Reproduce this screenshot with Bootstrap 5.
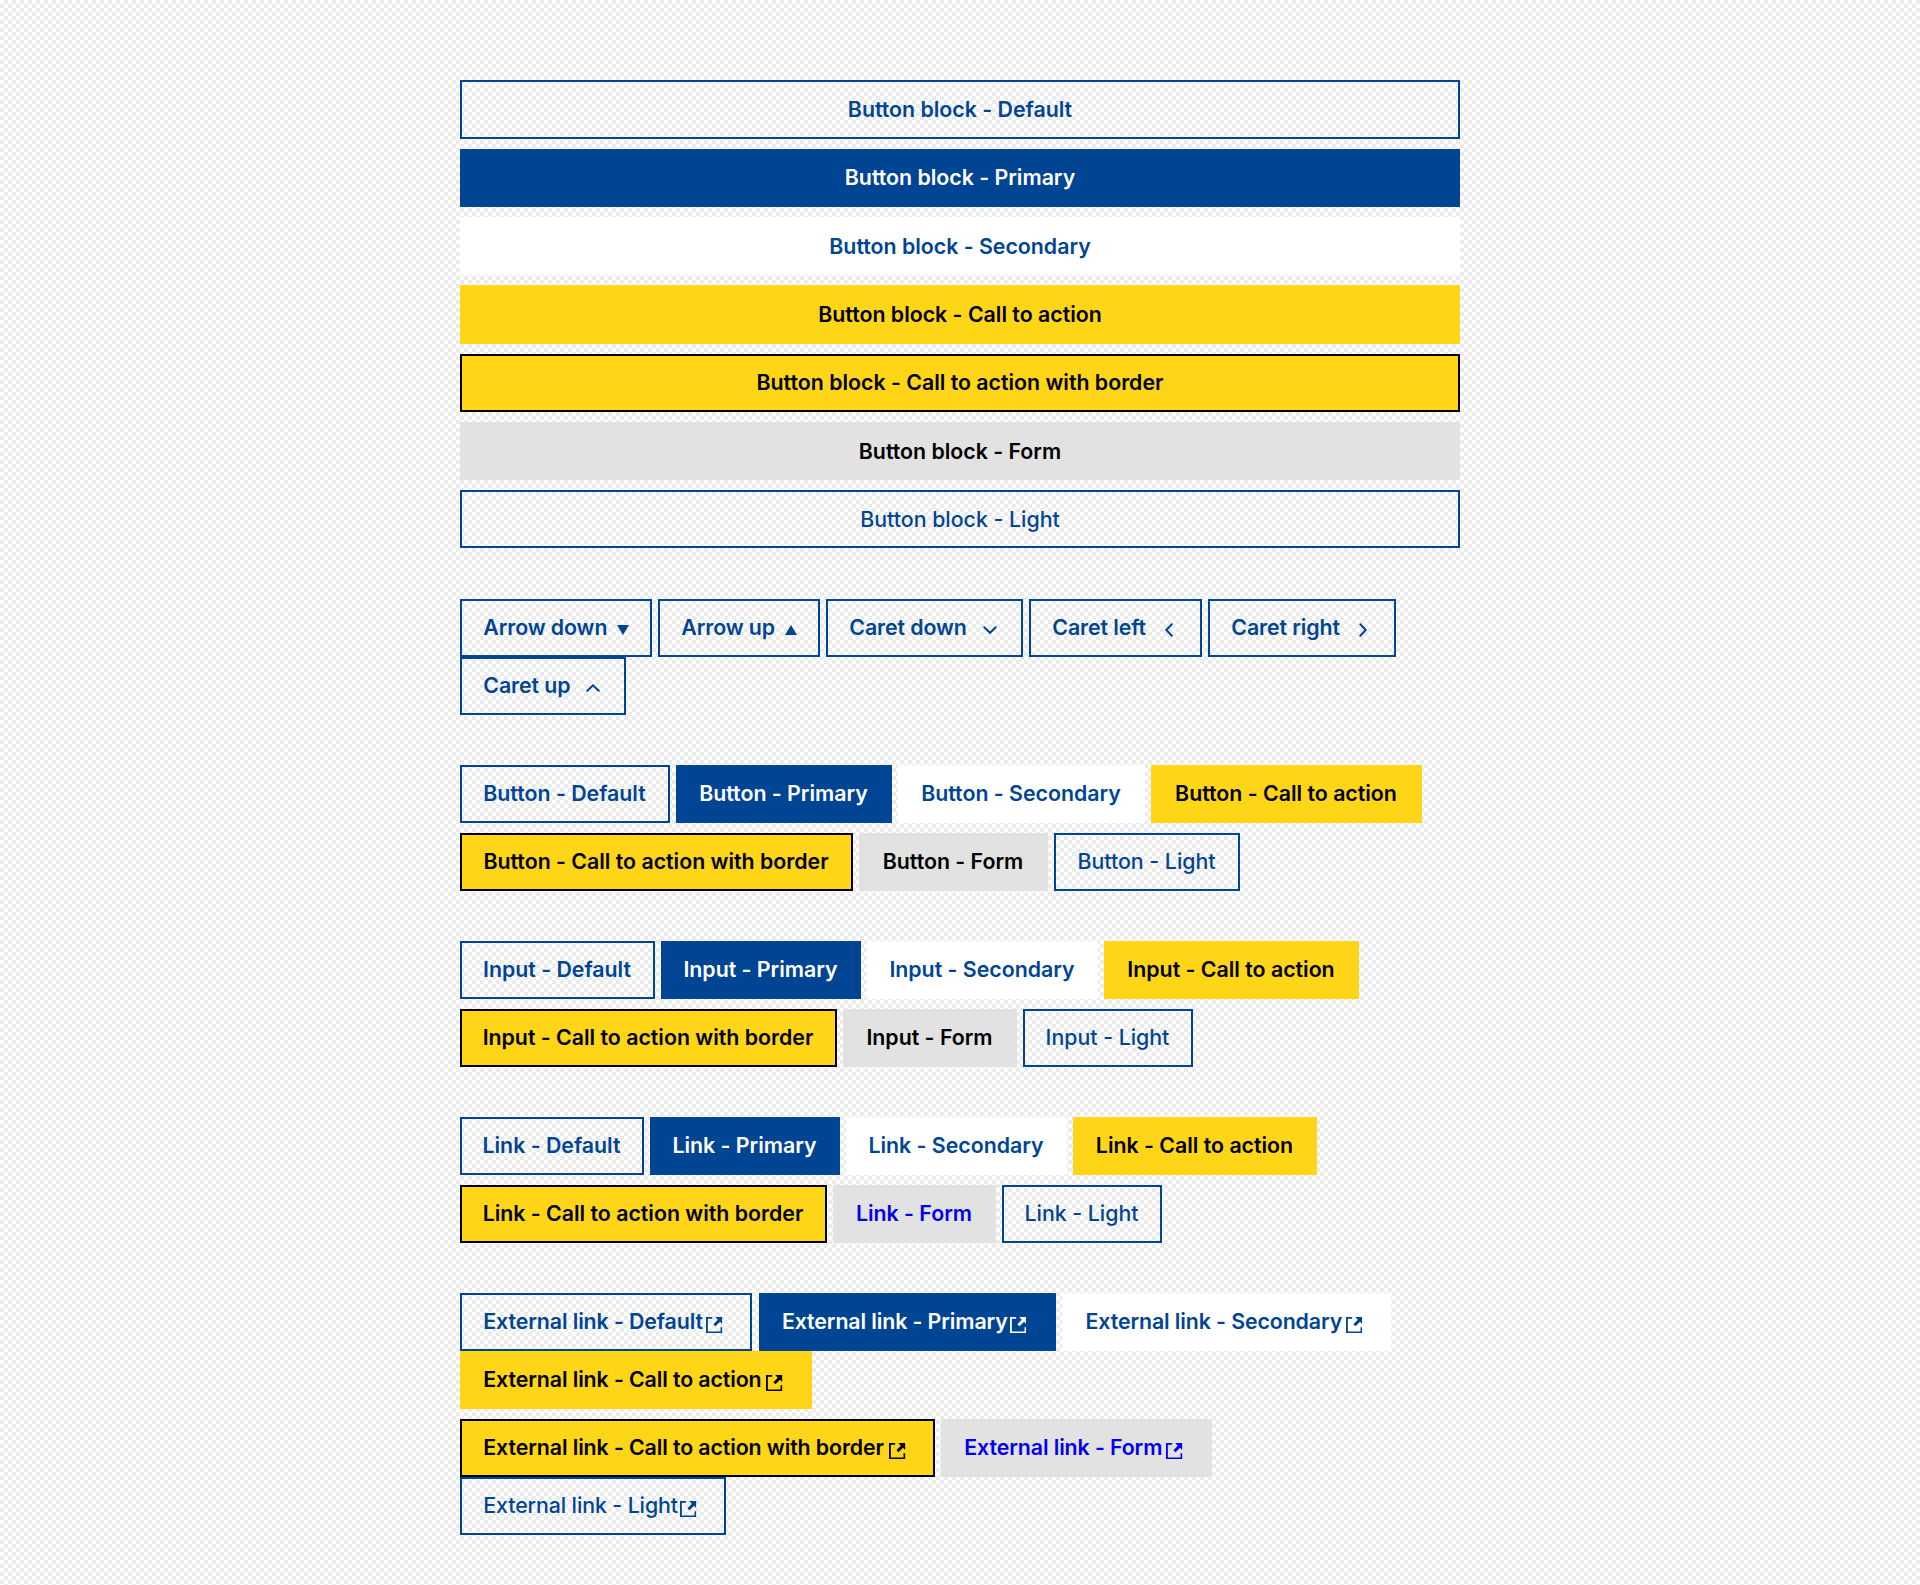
<!DOCTYPE html>
<html lang="en">
<head>
<meta charset="utf-8">
<meta name="viewport" content="width=device-width, initial-scale=1">
<title>Buttons</title>
<link href="https://cdn.jsdelivr.net/npm/bootstrap@5.3.0/dist/css/bootstrap.min.css" rel="stylesheet">
<style>
  body {
    font-family: Inter, "Liberation Sans", sans-serif;
    background: repeating-conic-gradient(#ebebeb 0 25%, #fff 0 50%) 0 0 / 8px 8px;
  }
  .demo { width: 1000px; padding-top: 80.4px; }
  .demo .btn {
    --bs-btn-font-family: Inter, "Liberation Sans", sans-serif;
    --bs-btn-font-size: 21.33px;
    --bs-btn-font-weight: 600;
    --bs-btn-line-height: 25px;
    --bs-btn-border-width: 2px;
    --bs-btn-border-radius: 0;
    --bs-btn-padding-x: 0;
    --bs-btn-padding-y: 14px;
    --bs-btn-color: #004494;
    --bs-btn-border-color: #004494;
    height: 58px;
    letter-spacing: -0.01px;
    white-space: nowrap;
  }
  .blocks { gap: 10px; margin-bottom: 50.1px; }
  .blocks .btn { height: 58.3px; }
  .rows { margin-bottom: 50px; }
  .rows .btn { padding-right: 1px; }
  .icons { margin-bottom: 50.3px; }
  .demo .b-primary { --bs-btn-bg: #004494; --bs-btn-color: #fff; }
  .demo .b-secondary { --bs-btn-bg: #fff; --bs-btn-border-color: #fff; }
  .demo .b-call { --bs-btn-bg: #ffd617; --bs-btn-border-color: #ffd617; --bs-btn-color: #000; }
  .demo .b-line { --bs-btn-border-color: #000; }
  .demo .b-form { --bs-btn-bg: #e2e2e2; --bs-btn-border-color: #e2e2e2; --bs-btn-color: #000; }
  .demo a.b-form { --bs-btn-color: #0000ee; }
  .demo .b-light { --bs-btn-font-weight: 500; }

  /* button tracks of each line */
  .line { gap: 6px; }
  .line + .apart { margin-top: 10px; }
  .arrows-1 { grid-template-columns: 192px 162px 197px 173px 188px; }
  .arrows-2 { grid-template-columns: 166px; }
  .buttons-1 { grid-template-columns: 210px 216px 247px 271px; }
  .buttons-2 { grid-template-columns: 393px 189px 186px; }
  .inputs-1 { grid-template-columns: 195px 200px 231px 255px; }
  .inputs-2 { grid-template-columns: 377px 174px 170px; }
  .links-1 { grid-template-columns: 184px 190px 221px 244px; }
  .links-2 { grid-template-columns: 367px 163px 160px; }
  .ext-1 { grid-template-columns: 292px 297px 329px; column-gap: 6.6px; }
  .ext-2 { grid-template-columns: 352px; }
  .ext-3 { grid-template-columns: 475px 271px; }
  .ext-4 { grid-template-columns: 266px; }

  .icons .btn, .external .btn { --bs-btn-padding-x: 21.3px; letter-spacing: -0.1px; }
  .icons svg, .external svg { fill: currentColor; flex: none; display: block; }
  .i-arrow { width: 12px; height: 10px; margin-top: 4px; }
  .i-caret { width: 14px; height: 14px; margin: 4px 3px 0 0; }
  .i-ext { width: 16.4px; height: 16.4px; margin: 6px 6px 0 0; }
</style>
</head>
<body>
<svg class="d-none">
  <symbol id="down" viewBox="0 0 12 10"><path d="M0 0h12L6 10z"/></symbol>
  <symbol id="up" viewBox="0 0 12 10"><path d="M0 10h12L6 0z"/></symbol>
  <symbol id="cdown" viewBox="0 0 14 14"><path d="M1.3 4.3 7 9.8l5.7-5.5" fill="none" stroke="currentColor" stroke-width="2" stroke-linecap="round"/></symbol>
  <symbol id="cup" viewBox="0 0 14 14"><path d="M1.3 9.8 7 4.3l5.7 5.5" fill="none" stroke="currentColor" stroke-width="2" stroke-linecap="round"/></symbol>
  <symbol id="cleft" viewBox="0 0 14 14"><path d="M9.8 1.3 4.3 7l5.5 5.7" fill="none" stroke="currentColor" stroke-width="2" stroke-linecap="round"/></symbol>
  <symbol id="cright" viewBox="0 0 14 14"><path d="M4.3 1.3 9.8 7l-5.5 5.7" fill="none" stroke="currentColor" stroke-width="2" stroke-linecap="round"/></symbol>
  <symbol id="ext" viewBox="0 0 16 16"><path d="M0 0h6v1.8H1.8v12.4h12.4V10H16v6H0z"/><path d="M9 0h7v7l-2.3-2.3-4.4 4.4-2.1-2.1 4.3-4.3z"/></symbol>
</svg>
<main class="demo mx-auto">
  <div class="blocks d-grid">
    <button class="btn">Button block - Default</button>
    <button class="btn b-primary">Button block - Primary</button>
    <button class="btn b-secondary">Button block - Secondary</button>
    <button class="btn b-call">Button block - Call to action</button>
    <button class="btn b-call b-line">Button block - Call to action with border</button>
    <button class="btn b-form">Button block - Form</button>
    <button class="btn b-light">Button block - Light</button>
  </div>

  <div class="icons">
    <div class="line d-grid arrows-1">
      <button class="btn d-flex align-items-center justify-content-between">Arrow down<svg class="i-arrow"><use href="#down"/></svg></button>
      <button class="btn d-flex align-items-center justify-content-between">Arrow up<svg class="i-arrow"><use href="#up"/></svg></button>
      <button class="btn d-flex align-items-center justify-content-between">Caret down<svg class="i-caret"><use href="#cdown"/></svg></button>
      <button class="btn d-flex align-items-center justify-content-between">Caret left<svg class="i-caret"><use href="#cleft"/></svg></button>
      <button class="btn d-flex align-items-center justify-content-between">Caret right<svg class="i-caret"><use href="#cright"/></svg></button>
    </div>
    <div class="line d-grid arrows-2">
      <button class="btn d-flex align-items-center justify-content-between">Caret up<svg class="i-caret"><use href="#cup"/></svg></button>
    </div>
  </div>

  <div class="rows">
    <div class="line d-grid buttons-1">
      <button class="btn">Button - Default</button>
      <button class="btn b-primary">Button - Primary</button>
      <button class="btn b-secondary">Button - Secondary</button>
      <button class="btn b-call">Button - Call to action</button>
    </div>
    <div class="line apart d-grid buttons-2">
      <button class="btn b-call b-line">Button - Call to action with border</button>
      <button class="btn b-form">Button - Form</button>
      <button class="btn b-light">Button - Light</button>
    </div>
  </div>

  <div class="rows">
    <div class="line d-grid inputs-1">
      <input type="submit" class="btn" value="Input - Default">
      <input type="submit" class="btn b-primary" value="Input - Primary">
      <input type="submit" class="btn b-secondary" value="Input - Secondary">
      <input type="submit" class="btn b-call" value="Input - Call to action">
    </div>
    <div class="line apart d-grid inputs-2">
      <input type="submit" class="btn b-call b-line" value="Input - Call to action with border">
      <input type="submit" class="btn b-form" value="Input - Form">
      <input type="submit" class="btn b-light" value="Input - Light">
    </div>
  </div>

  <div class="rows">
    <div class="line d-grid links-1">
      <a href="#" class="btn">Link - Default</a>
      <a href="#" class="btn b-primary">Link - Primary</a>
      <a href="#" class="btn b-secondary">Link - Secondary</a>
      <a href="#" class="btn b-call">Link - Call to action</a>
    </div>
    <div class="line apart d-grid links-2">
      <a href="#" class="btn b-call b-line">Link - Call to action with border</a>
      <a href="#" class="btn b-form">Link - Form</a>
      <a href="#" class="btn b-light">Link - Light</a>
    </div>
  </div>

  <div class="external">
    <div class="line d-grid ext-1">
      <a href="#" class="btn d-flex align-items-center justify-content-between">External link - Default<svg class="i-ext"><use href="#ext"/></svg></a>
      <a href="#" class="btn b-primary d-flex align-items-center justify-content-between">External link - Primary<svg class="i-ext"><use href="#ext"/></svg></a>
      <a href="#" class="btn b-secondary d-flex align-items-center justify-content-between">External link - Secondary<svg class="i-ext"><use href="#ext"/></svg></a>
    </div>
    <div class="line d-grid ext-2">
      <a href="#" class="btn b-call d-flex align-items-center justify-content-between">External link - Call to action<svg class="i-ext"><use href="#ext"/></svg></a>
    </div>
    <div class="line apart d-grid ext-3">
      <a href="#" class="btn b-call b-line d-flex align-items-center justify-content-between">External link - Call to action with border<svg class="i-ext"><use href="#ext"/></svg></a>
      <a href="#" class="btn b-form d-flex align-items-center justify-content-between">External link - Form<svg class="i-ext"><use href="#ext"/></svg></a>
    </div>
    <div class="line d-grid ext-4">
      <a href="#" class="btn b-light d-flex align-items-center justify-content-between">External link - Light<svg class="i-ext"><use href="#ext"/></svg></a>
    </div>
  </div>
</main>
<script src="https://cdn.jsdelivr.net/npm/bootstrap@5.3.0/dist/js/bootstrap.bundle.min.js"></script>
</body>
</html>
